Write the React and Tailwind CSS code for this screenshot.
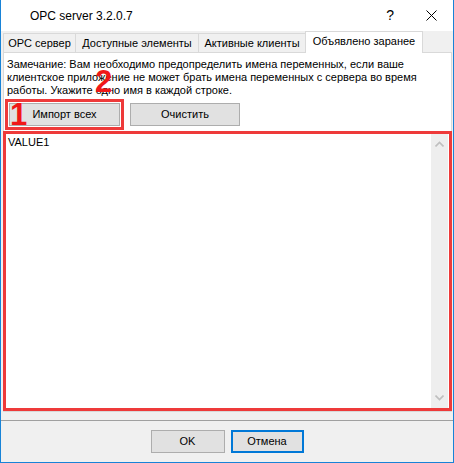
import { useState } from "react";

const FONT = { fontFamily: '"Liberation Sans", Arial, sans-serif' };

const TABS = [
  { label: "OPC сервер", w: "w-[72px]" },
  { label: "Доступные элементы", w: "w-[123px]" },
  { label: "Активные клиенты", w: "w-[107px]" },
];

function Chevron({ up }) {
  return (
    <svg width="9" height="6" viewBox="0 0 9 6" className="block">
      <path
        d={up ? "M0.5 5.5 L4.5 1.5 L8.5 5.5" : "M0.5 0.5 L4.5 4.5 L8.5 0.5"}
        fill="none"
        stroke="#bfbfbf"
        strokeWidth="1.6"
      />
    </svg>
  );
}

export default function App() {
  const [value, setValue] = useState("VALUE1");

  return (
    <div
      className="relative flex h-[463px] w-[454px] flex-col border-x border-b border-[#1883d7] bg-[#f0f0f0] text-[11px] text-black"
      style={FONT}
    >
      {/* title bar */}
      <div className="flex h-[31px] items-center bg-white">
        <span className="ml-[29px] text-[12px]">OPC server 3.2.0.7</span>
        <span className="ml-auto mr-[32px] text-[14px]">?</span>
        <svg width="11" height="11" viewBox="0 0 11 11" className="mr-[16px]">
          <path d="M0.5 0.5 L10.5 10.5 M10.5 0.5 L0.5 10.5" stroke="#000" strokeWidth="1" />
        </svg>
      </div>

      {/* tabs */}
      <div className="flex h-[21px] items-end pl-[2px]">
        {TABS.map((t) => (
          <div
            key={t.label}
            className={`flex h-[19px] items-center justify-center border-l border-t border-[#d9d9d9] bg-[#f0f0f0] ${t.w}`}
          >
            {t.label}
          </div>
        ))}
        <div className="relative z-10 -mb-px flex h-[22px] w-[118px] items-center justify-center border-x border-t border-[#d9d9d9] bg-white pb-[2px]">
          Объявлено заранее
        </div>
      </div>

      {/* tab page */}
      <div className="ml-[2px] mr-[1px] flex h-[360px] flex-col border border-[#d9d9d9] bg-white pt-[5px]">
        <p className="pl-[3px] leading-[13px]">
          Замечание: Вам необходимо предопределить имена переменных, если ваше клиентское
          приложение не может брать имена переменных с сервера во время работы. Укажите одно
          имя в каждой строке.
        </p>

        <div className="ml-[1px] mt-[2px] flex items-center gap-[6px]">
          <div className="border-[3px] border-[#ee3a3a] p-px">
            <button className="flex h-[23px] w-[111px] items-center justify-center border border-[#adadad] bg-[#e1e1e1]">
              Импорт всех
            </button>
          </div>
          <button className="flex h-[23px] w-[110px] items-center justify-center border border-[#adadad] bg-[#e1e1e1]">
            Очистить
          </button>
        </div>

        <div className="-mx-px mt-px flex flex-1 border-[3px] border-[#ee3a3a] bg-white">
          <textarea
            value={value}
            onChange={(e) => setValue(e.target.value)}
            className="flex-1 resize-none overflow-hidden bg-white pl-[2px] pt-[2px] leading-[13px] outline-none"
            style={FONT}
            spellCheck={false}
          />
          <div className="mr-px flex w-[17px] flex-col items-center justify-between bg-[#eeeeee] py-[7px]">
            <Chevron up />
            <Chevron />
          </div>
        </div>
      </div>

      {/* footer */}
      <div className="mt-[8px] flex flex-1 justify-center gap-[6px] border-t border-[#a0a0a0] pt-[9px]">
        <button className="flex h-[23px] w-[74px] items-center justify-center border border-[#adadad] bg-[#e1e1e1]">
          OK
        </button>
        <button className="flex h-[23px] w-[73px] items-center justify-center border-2 border-[#0078d7] bg-[#e1e1e1]">
          Отмена
        </button>
      </div>

      {/* annotation digits */}
      <span className="absolute left-[94px] top-[66px] text-[31px] font-bold leading-none text-[#f01818]">
        2
      </span>
      <span className="absolute left-[9px] top-[99px] text-[31px] font-bold leading-none text-[#f01818]">
        1
      </span>
    </div>
  );
}
